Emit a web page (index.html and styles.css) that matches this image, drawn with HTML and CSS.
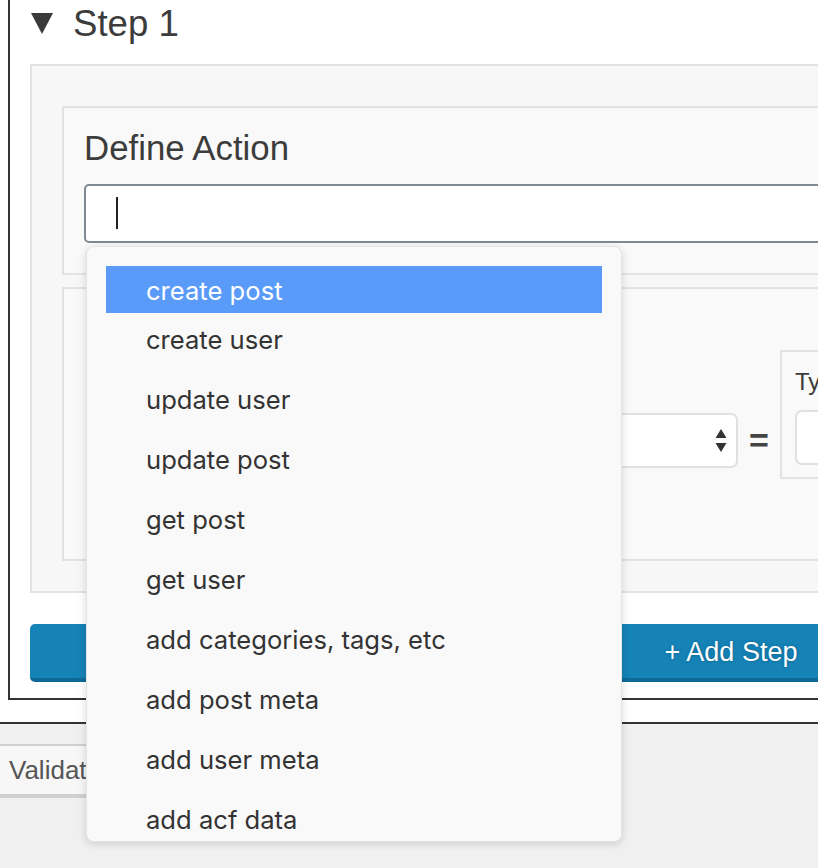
FILE: index.html
```html
<!DOCTYPE html>
<html>
<head>
<meta charset="utf-8">
<link rel="stylesheet" href="styles.css">
</head>
<body>
<div class="frame">
  <div class="step">
    <div class="step-head"><span class="tri"></span><span class="step-title">Step 1</span></div>
    <div class="panel">
      <div class="box define">
        <div class="define-title">Define Action</div>
        <div class="action-input"><span class="caret"></span></div>
      </div>
      <div class="box params">
        <div class="param-row">
          <div class="select"><span class="arrows"><svg width="12" height="26" viewBox="0 0 12 26"><path d="M6 1 L11.5 10 H0.5 Z" fill="#333"/><path d="M0.5 15 H11.5 L6 24 Z" fill="#333"/></svg></span></div>
          <div class="eq">=</div>
          <div class="type-box">
            <div class="type-label">Type</div>
            <div class="type-input"></div>
          </div>
        </div>
      </div>
    </div>
    <div class="add-step">+ Add Step</div>
  </div>
</div>
<div class="footer">
  <div class="validate">Validate</div>
</div>
<div class="dropdown">
  <div class="item active">create post</div>
  <div class="item">create user</div>
  <div class="item">update user</div>
  <div class="item">update post</div>
  <div class="item">get post</div>
  <div class="item">get user</div>
  <div class="item">add categories, tags, etc</div>
  <div class="item">add post meta</div>
  <div class="item">add user meta</div>
  <div class="item">add acf data</div>
</div>
</body>
</html>
```

FILE: styles.css
```css
html, body {
  margin: 0;
  padding: 0;
}
body {
  background: #f0f0f1;
  overflow: hidden;
  width: 818px;
  height: 868px;
  position: relative;
  font-family: Inter, "Liberation Sans", sans-serif;
  color: #3c3c3c;
}
.frame {
  background: #fff;
  border-bottom: 2px solid #333;
  height: 724px;
  box-sizing: border-box;
  padding-left: 8px;
  width: 1400px;
}
.step {
  border-left: 2px solid #333;
  border-bottom: 2px solid #333;
  height: 700px;
  box-sizing: border-box;
  padding-left: 20px;
}
.step-head {
  display: flex;
  align-items: center;
  height: 50px;
  padding-left: 1px;
}
.tri {
  width: 0;
  height: 0;
  border-left: 11px solid transparent;
  border-right: 11px solid transparent;
  border-top: 21px solid #3a3a3a;
  margin-right: 20px;
  margin-top: -3px;
}
.step-title {
  font-family: "Liberation Sans", sans-serif;
  font-size: 36.6px;
  color: #3c3c3c;
  margin-top: -2px;
}
.panel {
  margin-top: 14px;
  background: #f7f7f7;
  border: 2px solid #e2e2e2;
  height: 529px;
  box-sizing: border-box;
  padding: 40px 30px 30px 30px;
  display: flex;
  flex-direction: column;
  gap: 12px;
}
.box {
  background: #f9f9f9;
  border: 2px solid #e2e2e2;
  box-sizing: border-box;
}
.define {
  height: 169px;
  padding: 18px 20px 0 20px;
}
.define-title {
  font-family: "Liberation Sans", sans-serif;
  font-size: 34.8px;
  color: #3c3c3c;
  height: 58px;
  line-height: 44px;
}
.action-input {
  height: 59px;
  background: #fff;
  border: 2px solid #7e8993;
  border-radius: 5px;
  box-sizing: border-box;
  padding: 11px 0 0 30px;
}
.caret {
  display: block;
  width: 2px;
  height: 32px;
  background: #222;
}
.params {
  height: 274px;
  padding-left: 329px;
}
.param-row {
  display: flex;
  align-items: center;
  margin-top: 61px;
}
.select {
  width: 345px;
  height: 55px;
  background: #fff;
  border: 2px solid #e0e0e0;
  border-radius: 7px;
  box-sizing: border-box;
  display: flex;
  align-items: center;
  justify-content: flex-end;
  padding-right: 9px;
  margin-top: 52px;
}
.arrows {
  display: flex;
}
.eq {
  font-family: "Liberation Sans", sans-serif;
  font-size: 34px;
  font-weight: bold;
  color: #444;
  width: 42px;
  text-align: center;
  margin-top: 52px;
}
.type-box {
  border: 2px solid #e2e2e2;
  width: 300px;
  height: 129px;
  box-sizing: border-box;
  padding: 16px 13px 14px 13px;
}
.type-label {
  font-family: "Liberation Sans", sans-serif;
  font-size: 24px;
  color: #3c3c3c;
  height: 42px;
}
.type-input {
  height: 55px;
  background: #fff;
  border: 2px solid #e0e0e0;
  border-radius: 7px;
  box-sizing: border-box;
}
.add-step {
  margin-top: 31px;
  width: 1402px;
  height: 58px;
  box-sizing: border-box;
  background: #1583b6;
  border-bottom: 4px solid #0d6a98;
  border-radius: 5px;
  color: #fff;
  font-family: "Liberation Sans", sans-serif;
  font-size: 27px;
  text-align: center;
  line-height: 56px;
  text-shadow: 0 0 3px #0b5c85;
}
.footer {
  padding-top: 20px;
}
.validate {
  width: 200px;
  margin-left: -20px;
  height: 54px;
  box-sizing: border-box;
  background: #f7f7f7;
  border-top: 2px solid #cfcfcf;
  border-bottom: 4px solid #cfcfcf;
  font-family: "Liberation Sans", sans-serif;
  font-size: 26px;
  color: #555;
  padding-left: 29px;
  line-height: 48px;
}
.dropdown {
  position: absolute;
  left: 86px;
  top: 246px;
  width: 536px;
  height: 596px;
  box-sizing: border-box;
  background: #f9f9f9;
  border: 1px solid #e4e4e4;
  border-radius: 8px;
  box-shadow: 0 2px 8px rgba(0, 0, 0, 0.15);
  padding: 19px 19px;
}
.item {
  height: 60px;
  line-height: 60px;
  padding-left: 40px;
  font-size: 25.6px;
  color: #333;
}
.item.active {
  height: 47px;
  line-height: 50px;
  background: #5a9af8;
  color: #fff;
  margin-bottom: -3px;
}
```
